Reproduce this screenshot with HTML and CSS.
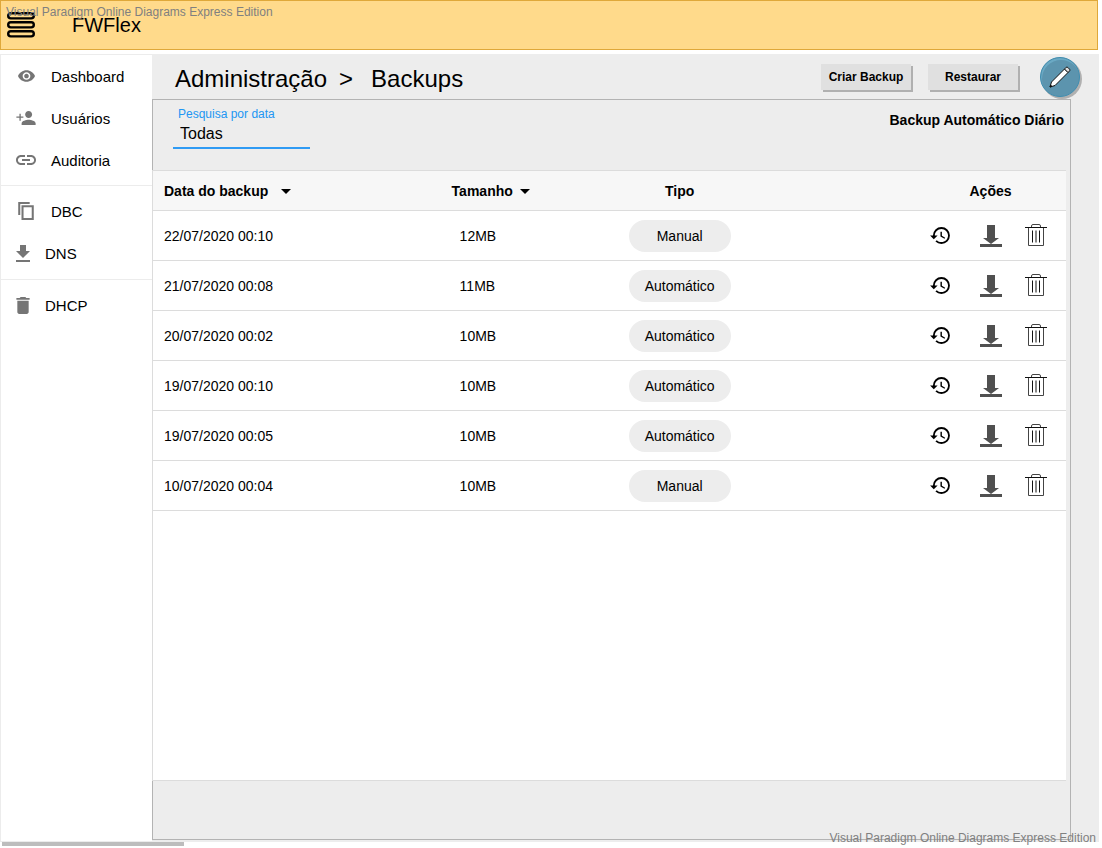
FILE: index.html
```html
<!DOCTYPE html>
<html lang="pt-BR">
<head>
<meta charset="utf-8">
<meta name="viewport" content="width=device-width, initial-scale=1">
<title>FWFlex - Backups</title>
<link rel="stylesheet" href="styles.css">
</head>
<body>
<svg class="defs" aria-hidden="true">
  <symbol id="history" viewBox="1 3 21 18"><path d="M13 3a9 9 0 0 0-9 9H1l3.890 3.890.070.140L9 12H6c0-3.870 3.130-7 7-7s7 3.130 7 7-3.130 7-7 7c-1.930 0-3.680-.790-4.940-2.060l-1.420 1.420A8.954 8.954 0 0 0 13 21a9 9 0 0 0 0-18zm-1 5v5l4.280 2.540.720-1.210-3.500-2.080V8H12z"/></symbol>
  <symbol id="download" viewBox="0 0 22 22"><path d="M7 0h8v13h4l-8 6-8-6h4zM0 19h22v3H0z" fill="#505050"/></symbol>
  <symbol id="trash" viewBox="0 0 22 23"><path d="M6.500 3.500V2q0-1.500 1.500-1.500h6q1.500 0 1.500 1.500v1.500M3.500 3.500v18h15v-18" fill="none" stroke="#444"/><path d="M0 3.500h22M7.500 6.500v12M11 6.500v12M14.500 6.500v12" fill="none" stroke="#111"/></symbol>
</svg>

<header class="topbar">
  <button class="menu" type="button" aria-label="Menu">
    <svg width="28" height="26" viewBox="0 0 28 26" fill="none" stroke="#000" stroke-width="2.400"><rect x="1.200" y="1.200" width="25.600" height="5.200" rx="2.600"/><rect x="1.200" y="10.200" width="25.600" height="5.200" rx="2.600"/><rect x="1.200" y="19.200" width="25.600" height="5.200" rx="2.600"/></svg>
  </button>
  <span class="brand">FWFlex</span>
  <span class="mark mark-top">Visual Paradigm Online Diagrams Express Edition</span>
</header>

<div class="layout">
  <nav class="sidebar" aria-label="Principal">
    <div class="group">
      <a class="item" href="#dashboard"><span class="icon"><svg width="17" height="12" viewBox="1 4.500 22 15"><path d="M12 4.500C7 4.500 2.730 7.610 1 12c1.730 4.390 6 7.500 11 7.500s9.270-3.110 11-7.500c-1.730-4.390-6-7.500-11-7.500zM12 17c-2.760 0-5-2.240-5-5s2.240-5 5-5 5 2.240 5 5-2.240 5-5 5zm0-8c-1.660 0-3 1.340-3 3s1.340 3 3 3 3-1.340 3-3-1.340-3-3-3z"/></svg></span>Dashboard</a>
      <a class="item" href="#usuarios"><span class="icon"><svg width="20" height="14" viewBox="1 4 22 16"><path d="M15 12c2.210 0 4-1.790 4-4s-1.790-4-4-4-4 1.790-4 4 1.790 4 4 4zM6 10.200V7H4.500v3.200H1v1.500h3.500V15H6v-3.300h3v-1.500zm9 3.800c-2.670 0-8 1.340-8 4v2h16v-2c0-2.660-5.330-4-8-4z"/></svg></span>Usuários</a>
      <a class="item" href="#auditoria"><span class="icon"><svg width="20" height="10" viewBox="2 7 20 10"><path d="M3.900 12c0-1.710 1.390-3.100 3.100-3.100h4V7H7c-2.760 0-5 2.240-5 5s2.240 5 5 5h4v-1.900H7c-1.710 0-3.100-1.390-3.100-3.100zM8 13h8v-2H8v2zm9-6h-4v1.900h4c1.710 0 3.100 1.390 3.100 3.100s-1.390 3.100-3.100 3.100h-4V17h4c2.760 0 5-2.240 5-5s-2.240-5-5-5z"/></svg></span>Auditoria</a>
    </div>
    <div class="group">
      <a class="item" href="#dbc"><span class="icon"><svg width="16" height="18" viewBox="2 1 19 22"><path d="M16 1H2v16h2.500V3.500H16V1zm5 4H6v18h15V5zm-2.500 15.500h-10v-13h10v13z"/></svg></span>DBC</a>
      <a class="item" href="#dns"><span class="icon narrow"><svg width="14" height="17" viewBox="5 3 14 17"><path d="M19 9h-4V3H9v6H5l7 7 7-7zM5 18v2h14v-2H5z"/></svg></span>DNS</a>
    </div>
    <div class="group">
      <a class="item" href="#dhcp"><span class="icon narrow"><svg width="14" height="17" viewBox="5 3 14 18"><path d="M6 19c0 1.100.9 2 2 2h8c1.100 0 2-.9 2-2V7H6v12zM19 4h-3.500l-1-1h-5l-1 1H5v2h14V4z"/></svg></span>DHCP</a>
    </div>
  </nav>

  <main class="main">
    <div class="heading">
      <h1 class="crumbs"><span>Administração</span><span>&gt;</span><span class="current">Backups</span></h1>
      <div class="tools">
        <button class="btn" type="button">Criar Backup</button>
        <button class="btn" type="button">Restaurar</button>
        <button class="edit" type="button" aria-label="Editar">
          <svg width="22" height="22" viewBox="0 0 22 22" fill="#fff" stroke="#111"><path d="M1 21l1.500-5L15.500 3l3.500 3.500L6 19.500z"/><path d="M15.500 3l1.700-1.700q.8-.6 1.600.1l1.800 1.800q.7.800.1 1.600L19 6.500z" fill="#ddd"/><path d="M1 21l.6-2 1.400 1.400z" fill="#111"/></svg>
        </button>
      </div>
    </div>

    <section class="panel">
      <div class="filters">
        <div class="field">
          <label for="date">Pesquisa por data</label>
          <input id="date" type="text" value="Todas">
        </div>
        <strong class="schedule">Backup Automático Diário</strong>
      </div>
      <div class="sheet">
        <table class="backups">
          <thead>
            <tr>
              <th class="date">Data do backup<svg class="caret wide" width="10" height="5" viewBox="0 0 10 5"><path d="M0 0h10L5 5z"/></svg></th>
              <th class="size">Tamanho<svg class="caret" width="10" height="5" viewBox="0 0 10 5"><path d="M0 0h10L5 5z"/></svg></th>
              <th class="type"><span class="type-label">Tipo</span></th>
              <th class="actions">Ações</th>
            </tr>
          </thead>
          <tbody id="rows"></tbody>
        </table>
      </div>
    </section>
  </main>
</div>
<div class="scroll"></div>
<span class="mark mark-bottom">Visual Paradigm Online Diagrams Express Edition</span>
<script src="app.js"></script>
</body>
</html>
```

FILE: styles.css
```css
* { box-sizing: border-box; }

body {
  margin: 0;
  min-height: 100vh;
  padding: 0 3px 2px 0;
  display: flex;
  flex-direction: column;
  position: relative;
  background: #fff;
  color: #000;
  font: 14px "Liberation Sans", Arial, sans-serif;
}

button, input { font-family: inherit; color: inherit; }
button { border: 0; padding: 0; background: none; cursor: pointer; }
svg { display: block; flex: none; }
.defs { position: absolute; width: 0; height: 0; }

.topbar {
  position: relative;
  height: 50px;
  margin-right: 1px;
  padding: 0 6px;
  display: flex;
  align-items: center;
  gap: 37px;
  background: #ffda8b;
  border: 1px solid #dfa83a;
}
.brand { font-size: 20px; }

.mark {
  position: absolute;
  color: #808080;
  font-size: 12px;
  line-height: 14px;
  white-space: nowrap;
}
.mark-top { left: 5px; top: 4px; }
.mark-bottom { right: 6px; bottom: 3px; }

.layout {
  flex: 1;
  display: flex;
  margin-top: 4px;
}

.sidebar {
  flex: 0 0 152px;
  border: 1px solid #ececec;
  border-right: 0;
}
.group { padding: 4px 0 5px; }
.group:first-child { padding: 0 0 4px; }
.group + .group { border-top: 1px solid #ececec; }
.item {
  display: flex;
  align-items: center;
  gap: 15px;
  height: 42px;
  padding-left: 15px;
  color: #000;
  font-size: 15px;
  text-decoration: none;
}
.icon {
  width: 20px;
  display: flex;
  justify-content: center;
  fill: #757575;
}
.icon.narrow { width: 14px; }

.main {
  flex: 1;
  min-width: 0;
  display: flex;
  flex-direction: column;
  padding-bottom: 2px;
  background: #ededed;
}
.heading {
  height: 45px;
  padding: 0 19px 0 23px;
  display: flex;
  justify-content: space-between;
  align-items: center;
}
.crumbs {
  margin: 0;
  padding-top: 4px;
  display: flex;
  align-items: baseline;
  gap: 12px;
  font-size: 24px;
  font-weight: 400;
}
.current { padding-left: 6px; }
.tools {
  display: flex;
  align-items: center;
  gap: 17px;
}
.btn {
  width: 90px;
  height: 26px;
  background: #e0e0e0;
  box-shadow: 2px 2px #b0b0b0;
  font-size: 12px;
  font-weight: 700;
}
.edit {
  width: 40px;
  height: 40px;
  margin-left: 5px;
  display: grid;
  place-items: center;
  border-radius: 50%;
  background: #5c94ae;
  border: 1px solid #3f8db0;
  box-shadow: 2px 2px #b0b0b0, inset 1px 2px #6aa9c4;
}

.panel {
  flex: 1;
  display: flex;
  flex-direction: column;
  margin-right: 28px;
  padding: 0 4px 58px 0;
  border: 1px solid #b3b3b3;
}
.filters {
  height: 70px;
  padding: 7px 2px 0 20px;
  display: flex;
  justify-content: space-between;
}
.field {
  width: 137px;
  display: flex;
  flex-direction: column;
}
.field label {
  padding-left: 5px;
  color: #2196f3;
  font-size: 12px;
  line-height: 14px;
}
.field input {
  width: 100%;
  height: 28px;
  padding: 0 0 0 7px;
  border: 0;
  border-bottom: 2px solid #2f9bf4;
  background: none;
  font-size: 16px;
}
.schedule { padding-top: 5px; }

.sheet {
  flex: 1;
  margin-left: -1px;
  background: #fff;
  border: solid #dcdcdc;
  border-width: 1px 0 1px 1px;
}
.backups {
  width: 100%;
  table-layout: fixed;
  border-collapse: separate;
  border-spacing: 0;
}
.backups th, .backups td {
  height: 50px;
  padding: 0;
  border-bottom: 1px solid #dcdcdc;
  text-align: left;
}
.backups th {
  height: 40px;
  background: #f7f7f7;
}
.backups .date { width: 31.5%; padding-left: 11px; }
.backups .size { width: 20.6%; padding-left: 11px; }
.backups td.size { padding-left: 19px; }
.backups .actions { width: 151px; text-align: center; }
.caret {
  display: inline-block;
  margin-left: 7px;
  vertical-align: middle;
}
.caret.wide { margin-left: 13px; }
.type-label {
  display: block;
  width: 102px;
  text-align: center;
}
.pill {
  line-height: 32px;
  border-radius: 16px;
  background: #ededed;
}
.buttons {
  display: grid;
  grid-template-columns: 50px 52px 38px;
}
.buttons button {
  display: grid;
  place-items: center;
}

.scroll {
  width: 182px;
  height: 4px;
  margin-left: 2px;
  background: #bdbdbd;
}
```

FILE: app.js
```js
const backups = [
  ["22/07/2020 00:10", "12MB", "Manual"],
  ["21/07/2020 00:08", "11MB", "Automático"],
  ["20/07/2020 00:02", "10MB", "Automático"],
  ["19/07/2020 00:10", "10MB", "Automático"],
  ["19/07/2020 00:05", "10MB", "Automático"],
  ["10/07/2020 00:04", "10MB", "Manual"]
];

const action = (id, label, width, height) =>
  `<button type="button" aria-label="${label}"><svg width="${width}" height="${height}"><use href="#${id}"/></svg></button>`;

document.getElementById("rows").innerHTML = backups.map(([date, size, type]) => `
  <tr>
    <td class="date">${date}</td>
    <td class="size">${size}</td>
    <td class="type"><span class="type-label pill">${type}</span></td>
    <td class="actions"><div class="buttons">
      ${action("history", "Restaurar", 20, 17)}
      ${action("download", "Baixar", 22, 22)}
      ${action("trash", "Excluir", 22, 23)}
    </div></td>
  </tr>`).join("");
```
